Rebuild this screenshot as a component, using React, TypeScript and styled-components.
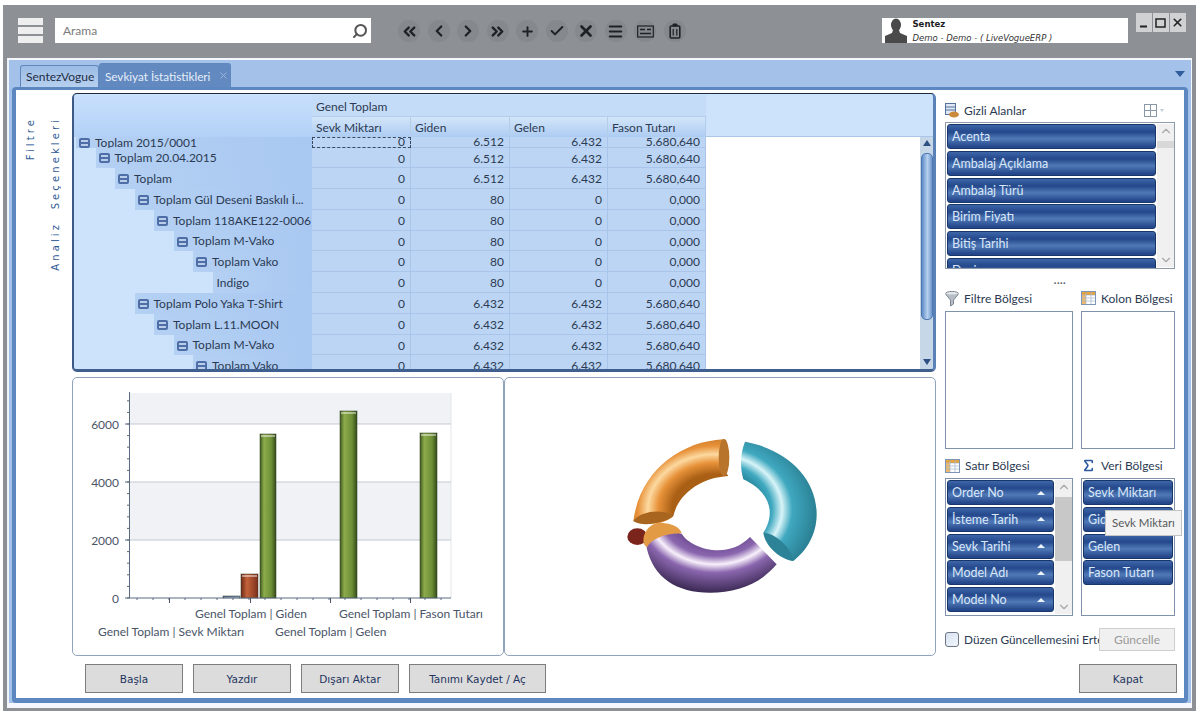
import React from 'react';
import styled, { createGlobalStyle } from 'styled-components';
import {
  Check,
  ChevronDown,
  ChevronLeft,
  ChevronRight,
  ChevronUp,
  ChevronsLeft,
  ChevronsRight,
  Menu,
  Plus,
  Search,
  Sigma,
  X,
} from 'lucide-react';

const UI_FONT = `Lato, "Open Sans", "Liberation Sans", sans-serif`;

const GlobalStyle = createGlobalStyle`
  html, body { margin: 0; padding: 0; background: #fff; }
  body { font-family: ${UI_FONT}; font-size: 12px; color: #2b3a52; }
  * { box-sizing: border-box; }
`;

type PivotRow = { level: number; label: string; values: string[]; leaf?: boolean };

const big = ['0', '6.512', '6.432', '5.680,640'];
const small = ['0', '80', '0', '0,000'];
const poly = ['0', '6.432', '6.432', '5.680,640'];

const rows: PivotRow[] = [
  { level: 0, label: 'Toplam 2015/0001', values: big },
  { level: 1, label: 'Toplam 20.04.2015', values: big },
  { level: 2, label: 'Toplam', values: big },
  { level: 3, label: 'Toplam Gül Deseni Baskılı İ...', values: small },
  { level: 4, label: 'Toplam 118AKE122-0006', values: small },
  { level: 5, label: 'Toplam M-Vako', values: small },
  { level: 6, label: 'Toplam Vako', values: small },
  { level: 7, label: 'Indigo', values: small, leaf: true },
  { level: 3, label: 'Toplam Polo Yaka T-Shirt', values: poly },
  { level: 4, label: 'Toplam L.11.MOON', values: poly },
  { level: 5, label: 'Toplam M-Vako', values: poly },
  { level: 6, label: 'Toplam Vako', values: poly },
];

const columns = ['Sevk Miktarı', 'Giden', 'Gelen', 'Fason Tutarı'];
const hiddenFields = ['Acenta', 'Ambalaj Açıklama', 'Ambalaj Türü', 'Birim Fiyatı', 'Bitiş Tarihi', 'Desi'];
const rowFields = ['Order No', 'İsteme Tarih', 'Sevk Tarihi', 'Model Adı', 'Model No'];
const dataFields = ['Sevk Miktarı', 'Giden', 'Gelen', 'Fason Tutarı'];

const Window = styled.div`
  width: 1193px;
  height: 706px;
  margin: 5px 0 0 3px;
  padding: 0 4px 3px 4px;
  background: #8d9094;
  display: flex;
  flex-direction: column;
`;

const TopBar = styled.div`
  height: 53px;
  flex: none;
  display: flex;
  align-items: flex-start;
  padding: 13px 0 0 11px;
`;

const Hamburger = styled.div`
  width: 25px;
  height: 25px;
  flex: none;
  display: flex;
  flex-direction: column;
  justify-content: space-between;
  margin-right: 12px;
  span {
    display: block;
    height: 7px;
    background: #eeeeee;
  }
`;

const SearchBox = styled.div`
  width: 316px;
  height: 25px;
  flex: none;
  background: #fff;
  display: flex;
  align-items: center;
  justify-content: space-between;
  padding: 0 2px 0 8px;
  font-size: 12px;
  color: #7b7b7b;
  svg { color: #555; transform: scaleX(-1); margin-right: 1px; }
`;

const Tools = styled.div`
  display: flex;
  gap: 7.5px;
  margin-left: 27px;
  margin-top: 2px;
`;

const ToolButton = styled.div`
  width: 22px;
  height: 22px;
  border-radius: 50%;
  background: #85888c;
  color: #1e2226;
  display: flex;
  align-items: center;
  justify-content: center;
`;

const UserBox = styled.div`
  width: 246px;
  height: 25px;
  flex: none;
  margin-left: 196px;
  background: #fff;
  display: flex;
  padding-left: 2px;
`;

const UserText = styled.div`
  margin-left: 5px;
  font-family: "DejaVu Sans", sans-serif;
  font-size: 8.5px;
  color: #1c1c1c;
  line-height: 13px;
  b { display: block; }
  i { display: block; color: #333; margin-top: 1px; }
`;

const WindowButtons = styled.div`
  display: flex;
  gap: 1px;
  margin-left: 8px;
  margin-top: -5px;
`;

const WindowButton = styled.div`
  width: 16px;
  height: 19px;
  background: #d0d1d3;
  display: flex;
  align-items: center;
  justify-content: center;
  color: #222;
`;

const Frame = styled.div`
  flex: 1;
  min-height: 0;
  background: #a4c2e9;
  border-top: 2px solid #f4f7fb;
  border-left: 2px solid #eef3fa;
  border-right: 1px solid #f4f7fb;
  border-bottom: 5px solid #f4f7fb;
  display: flex;
  flex-direction: column;
  padding: 0 3px 0 3px;
`;

const TabBar = styled.div`
  height: 27px;
  flex: none;
  display: flex;
  align-items: flex-end;
  padding-left: 8px;
`;

const Tab = styled.div<{ $active?: boolean }>`
  height: ${(p) => (p.$active ? '24px' : '22px')};
  width: ${(p) => (p.$active ? '132px' : '79px')};
  padding-left: 5px;
  display: flex;
  align-items: center;
  gap: ${(p) => (p.$active ? '8px' : '6px')};
  border-radius: 3px 3px 0 0;
  border: 1px solid #5f88bf;
  border-bottom: none;
  background: ${(p) => (p.$active ? '#6289c0' : 'linear-gradient(#9cbce5, #b6cfef)')};
  color: ${(p) => (p.$active ? '#e6effa' : '#1d2d44')};
  font-size: ${(p) => (p.$active ? '11.7px' : '12px')};
  white-space: nowrap;
  svg { color: #9fb8da; }
`;

const TabMenu = styled.div`
  margin-left: auto;
  margin-right: 3px;
  align-self: center;
  width: 0;
  height: 0;
  border-left: 5px solid transparent;
  border-right: 5px solid transparent;
  border-top: 6px solid #2e5c9c;
`;

const Panel = styled.div`
  flex: 1;
  min-height: 0;
  background: #fff;
  border: 4px solid #5c87c0;
  border-top-width: 3px;
  border-bottom-width: 5px;
  border-radius: 4px;
  display: grid;
  grid-template-columns: 48px 864px 233px;
  column-gap: 8px;
`;

const Side = styled.div`
  display: flex;
  gap: 14px;
  padding: 27px 0 0 9px;
  align-items: flex-start;
`;

const SideLabel = styled.div`
  writing-mode: vertical-rl;
  transform: rotate(180deg);
  font-family: "DejaVu Sans", sans-serif;
  font-size: 10px;
  letter-spacing: 3.1px;
  color: #2f5a95;
  white-space: pre;
`;

const Main = styled.div`
  display: flex;
  flex-direction: column;
  padding-top: 3px;
`;

const Pivot = styled.div`
  height: 279px;
  flex: none;
  background: #cde3fc;
  border-top: 1px solid #1c2b3f;
  border-left: 2px solid #3c5a85;
  border-right: 3px solid #5b82b6;
  border-bottom: 3px solid #3f5f8f;
  border-radius: 5px;
  overflow: hidden;
  display: flex;
  flex-direction: column;
  padding-top: 1px;
`;

const PivotHead = styled.div`
  height: 42px;
  flex: none;
  display: grid;
  grid-template-columns: 238px 394px 1fr;
  border-bottom: 1px solid #aac6e8;
`;

const HeadBlank = styled.div`
  background: linear-gradient(#c8e0fc, #b2d0f7);
`;

const HeadColumns = styled.div`
  display: flex;
  flex-direction: column;
`;

const HeadTitle = styled.div`
  height: 21px;
  background: #c5dcf8;
  padding-left: 4px;
  line-height: 23px;
  font-size: 12px;
`;

const HeadRow = styled.div`
  height: 21px;
  display: grid;
  grid-template-columns: 99px 99px 98px 98px;
`;

const HeadCell = styled.div`
  background: linear-gradient(#d3e5f9, #a9c9f2);
  border-top: 1px solid #b4cde9;
  border-right: 1px solid #b4cde9;
  padding-left: 4px;
  line-height: 22px;
  font-size: 12px;
`;

const PivotBody = styled.div`
  flex: 1;
  min-height: 0;
  display: flex;
`;

const RowsArea = styled.div`
  width: 632px;
  flex: none;
  overflow: hidden;
`;

const Row = styled.div<{ $first?: boolean }>`
  height: ${(p) => (p.$first ? '10.5px' : '20.8px')};
  display: grid;
  grid-template-columns: 238px 99px 99px 98px 98px;
  line-height: ${(p) => (p.$first ? '10px' : '22.5px')};
  font-size: 12px;
`;

const RowLabel = styled.div<{ $level: number }>`
  margin-left: ${(p) => 2 + p.$level * 19.5}px;
  padding-left: ${(p) => (p.$level === 7 ? 4 : 3)}px;
  padding-top: 1px;
  background: linear-gradient(90deg, #b4d0f3, #a9c8f1);
  display: flex;
  align-items: center;
  gap: 5px;
  white-space: nowrap;
  overflow: hidden;
`;

const Collapse = styled.span`
  width: 11px;
  height: 10px;
  flex: none;
  border: 2px solid #4d6ea6;
  border-radius: 2px;
  background: linear-gradient(#b9cdea 0 30%, #4d6ea6 30% 62%, #b9cdea 62%);
`;

const ValueCell = styled.div<{ $focus?: boolean }>`
  text-align: right;
  padding-right: 5px;
  background: #bcd5f4;
  border-right: 1px solid #a9c5ea;
  border-bottom: 1px solid #a9c5ea;
  overflow: hidden;
  ${(p) => (p.$focus ? 'outline: 1px dashed #3a4a60; outline-offset: -1px;' : '')}
`;

const WhiteArea = styled.div`
  flex: 1;
  background: #fff;
`;

const GridScroll = styled.div`
  width: 13px;
  flex: none;
  background: #c6d7e8;
  display: flex;
  flex-direction: column;
  align-items: center;
`;

const ArrowUp = styled.span`
  margin-top: 3px;
  width: 0;
  height: 0;
  border-left: 4px solid transparent;
  border-right: 4px solid transparent;
  border-bottom: 6px solid #2e4f82;
`;

const ArrowDown = styled.span`
  margin-top: auto;
  margin-bottom: 4px;
  width: 0;
  height: 0;
  border-left: 4px solid transparent;
  border-right: 4px solid transparent;
  border-top: 6px solid #2e4f82;
`;

const GridThumb = styled.div`
  width: 12px;
  height: 167px;
  margin-top: 7px;
  border: 1px solid #4d77b0;
  border-radius: 5px;
  background: linear-gradient(90deg, #5f8cc6, #b6d0ee 55%, #6e97cc);
`;

const ChartsRow = styled.div`
  height: 279px;
  flex: none;
  margin-top: 5px;
  display: grid;
  grid-template-columns: 432px 432px;
`;

const ChartCard = styled.div`
  border: 1px solid #8fa3bd;
  border-radius: 5px;
  background: #fff;
  display: flex;
  align-items: center;
  justify-content: center;
`;

const DonutCard = styled(ChartCard)`
  padding-bottom: 12px;
`;

const ButtonRow = styled.div`
  margin-top: 8px;
  padding-left: 13px;
  display: flex;
  gap: 10px;
`;

const PlainButton = styled.div<{ $width: number }>`
  width: ${(p) => p.$width}px;
  height: 29px;
  flex: none;
  background: #dcdcdc;
  border: 1px solid #7d7d7d;
  display: flex;
  align-items: center;
  justify-content: center;
  font-family: "DejaVu Sans", sans-serif;
  font-size: 10.5px;
  color: #1f3560;
`;

const Right = styled.div`
  display: flex;
  flex-direction: column;
  padding: 10px 2px 0 1px;
`;

const FieldHead = styled.div`
  height: 20px;
  flex: none;
  display: flex;
  align-items: center;
  gap: 5px;
  font-size: 12px;
  color: #2b3a52;
  white-space: nowrap;
`;

const LayoutPick = styled.div`
  margin-left: auto;
  margin-right: 11px;
  display: flex;
  align-items: center;
  gap: 3px;
  span {
    width: 0;
    height: 0;
    border-left: 2.5px solid transparent;
    border-right: 2.5px solid transparent;
    border-top: 3px solid #c3ccd8;
  }
`;

const HiddenList = styled.div`
  height: 147px;
  flex: none;
  margin-top: 2px;
  border: 1px solid #8d9bab;
  display: flex;
  overflow: hidden;
  padding: 1px;
`;

const FieldStack = styled.div`
  flex: 1;
  min-width: 0;
  display: flex;
  flex-direction: column;
  gap: 1.8px;
`;

const FieldButton = styled.div`
  height: 25px;
  flex: none;
  border: 1px solid #183668;
  border-radius: 3px;
  background: linear-gradient(#3d66a8, #24488b 30%, #5079b7 60%, #24468a 95%);
  color: #d9e7f9;
  font-size: 12.5px;
  padding: 0 8px 0 4px;
  display: flex;
  align-items: center;
  justify-content: space-between;
  white-space: nowrap;
  overflow: hidden;
`;

const SortMark = styled.span`
  width: 0;
  height: 0;
  border-left: 4.5px solid transparent;
  border-right: 4.5px solid transparent;
  border-bottom: 4px solid #eaf2fc;
`;

const ListScroll = styled.div<{ $thumbTop: number; $thumbHeight: number; $thumbColor: string }>`
  width: 17px;
  flex: none;
  margin-left: 1px;
  margin-right: -1px;
  background: #f0f0f0;
  display: flex;
  flex-direction: column;
  align-items: center;
  justify-content: space-between;
  color: #a8a8a8;
  position: relative;
  &::before {
    content: '';
    position: absolute;
    left: 0;
    right: 0;
    top: ${(p) => p.$thumbTop}px;
    height: ${(p) => p.$thumbHeight}px;
    background: ${(p) => p.$thumbColor};
  }
`;

const Dots = styled.div`
  height: 22px;
  flex: none;
  display: flex;
  align-items: center;
  justify-content: center;
  font-size: 11px;
  font-weight: 700;
  letter-spacing: 0.5px;
  line-height: 10px;
  color: #55606e;
`;

const ZoneGrid = styled.div`
  display: grid;
  grid-template-columns: 128px 94px;
  column-gap: 8px;
`;

const ZoneHead = styled(FieldHead)<{ $height: number }>`
  height: ${(p) => p.$height}px;
  align-items: ${(p) => (p.$height > 20 ? 'flex-end' : 'flex-start')};
  padding-bottom: ${(p) => (p.$height > 20 ? '5px' : '0')};
`;

const Zone = styled.div`
  height: 138px;
  border: 1px solid #7f92a9;
  background: #fff;
  display: flex;
  padding: 1px;
  position: relative;
`;

const Tip = styled.div`
  position: absolute;
  left: 23px;
  top: 31px;
  width: 77px;
  height: 26px;
  background: #f3f3f3;
  border: 1px solid #c4c4c4;
  color: #56585c;
  font-size: 11.5px;
  line-height: 24px;
  padding-left: 6px;
  white-space: nowrap;
`;

const DeferRow = styled.div`
  height: 23px;
  flex: none;
  margin-top: 12px;
  display: flex;
  align-items: center;
`;

const CheckBox = styled.span`
  width: 14px;
  height: 15px;
  flex: none;
  border: 1px solid #6d7686;
  border-radius: 3px;
  background: linear-gradient(135deg, #d6e2f1, #f3f6fb);
  margin-right: 5px;
`;

const DeferLabel = styled.span`
  flex: 1;
  min-width: 0;
  overflow: hidden;
  white-space: nowrap;
  font-size: 11.8px;
`;

const ApplyButton = styled.div`
  width: 76px;
  height: 23px;
  flex: none;
  background: #f0f0f0;
  border: 1px solid #cfcfcf;
  color: #9a9a9a;
  font-size: 12px;
  display: flex;
  align-items: center;
  justify-content: center;
`;

const CloseRow = styled.div`
  margin-top: 13px;
  display: flex;
  justify-content: flex-end;
  margin-right: -2px;
`;

const CardIcon = () => (
  <svg width="17" height="13" viewBox="0 0 17 13" fill="none" stroke="#1e2226">
    <rect x="0.7" y="1" width="15.6" height="11" strokeWidth="1.2" />
    <path d="M3 4.5h5M3 8.5h11M10 4.5h4" strokeWidth="1.6" />
  </svg>
);

const BinIcon = () => (
  <svg width="12" height="16" viewBox="0 0 12 16" fill="none" stroke="#1e2226">
    <path d="M4 1h4v2H4z" fill="#1e2226" />
    <rect x="1.2" y="3" width="9.6" height="12" rx="1" strokeWidth="1.6" />
    <path d="M4.2 6v6.5M7.8 6v6.5" strokeWidth="1.2" />
  </svg>
);

const Avatar = () => (
  <svg width="24" height="25" viewBox="0 0 24 25" fill="#4a4a4a">
    <ellipse cx="12" cy="7" rx="5" ry="6.5" />
    <path d="M9 12h6l1 3 7 3v7H1v-7l7-3z" />
  </svg>
);

const HiddenIcon = () => (
  <svg width="14" height="15" viewBox="0 0 14 15">
    <rect x="0.5" y="0.5" width="10" height="11" fill="#dfe8f4" stroke="#54729c" />
    <path d="M1 4h9M1 7h9" stroke="#54729c" />
    <ellipse cx="9" cy="11.5" rx="5" ry="3" fill="#c98a3a" />
  </svg>
);

const FunnelIcon = () => (
  <svg width="14" height="16" viewBox="0 0 14 16">
    <ellipse cx="7" cy="2.6" rx="6.4" ry="2.2" fill="#e2e6ea" stroke="#7d8791" />
    <path d="M1 3.5 5.5 9v6l3-2V9L13 3.5" fill="#b6bdc5" stroke="#7d8791" />
  </svg>
);

const TableIcon = ({ stripe }: { stripe: string }) => (
  <svg width="15" height="14" viewBox="0 0 15 14">
    <rect x="0.5" y="0.5" width="14" height="13" fill="#fff" stroke="#7d96b8" />
    <rect x="1" y="1" width="13" height="3" fill={stripe} />
    <rect x="1" y="4" width="4" height="9" fill={stripe} opacity="0.75" />
    <path d="M5 1v12M10 1v12M1 4h13M1 7h13M1 10h13" stroke="#a2b4cb" strokeWidth="0.7" />
  </svg>
);

const LayoutIcon = () => (
  <svg width="13" height="13" viewBox="0 0 13 13" fill="none" stroke="#8b98a8">
    <rect x="0.5" y="0.5" width="12" height="12" />
    <path d="M6.5 0v13M0 6.5h13" />
  </svg>
);

const BarChart = () => {
  const bars = [
    { x: 223, y: 596, w: 17, fill: 'url(#barBlue)' },
    { x: 241, y: 574, w: 17, fill: 'url(#barRed)' },
    { x: 260, y: 434, w: 16, fill: 'url(#barGreen)' },
    { x: 340, y: 411, w: 17, fill: 'url(#barGreen)' },
    { x: 420, y: 433, w: 17, fill: 'url(#barGreen)' },
  ];
  const minor: number[] = [];
  for (let x = 137; x < 450; x += 16) minor.push(x);
  const yMinor: number[] = [];
  for (let y = 598; y > 392; y -= 11.6) yMinor.push(y);
  return (
    <svg width="430" height="277" viewBox="73 378 430 277" fontFamily={UI_FONT} fontSize="12" fill="#4a5568">
      <defs>
        <linearGradient id="barGreen" x1="0" x2="1" y1="0" y2="0">
          <stop offset="0" stopColor="#3f5a20" />
          <stop offset="0.25" stopColor="#8cab4b" />
          <stop offset="0.7" stopColor="#6e8f37" />
          <stop offset="1" stopColor="#344c1a" />
        </linearGradient>
        <linearGradient id="barRed" x1="0" x2="1" y1="0" y2="0">
          <stop offset="0" stopColor="#6d2a18" />
          <stop offset="0.35" stopColor="#c4633a" />
          <stop offset="1" stopColor="#7c2f1c" />
        </linearGradient>
        <linearGradient id="barBlue" x1="0" x2="1" y1="0" y2="0">
          <stop offset="0" stopColor="#4d628f" />
          <stop offset="1" stopColor="#7c90bb" />
        </linearGradient>
      </defs>
      <rect x="130" y="393" width="321" height="31" fill="#f0f2f6" />
      <rect x="130" y="482" width="321" height="58" fill="#f0f2f6" />
      <path d="M451 393v205" stroke="#e4e6ea" />
      <path d="M130 424h321M130 482h321M130 540h321" stroke="#c3c9d3" />
      {bars.map((b) => (
        <g key={b.x}>
          <rect x={b.x} y={b.y} width={b.w} height={598 - b.y} fill={b.fill} stroke="#2c3a1c" strokeOpacity="0.5" />
          <rect x={b.x + 1} y={b.y + 1} width={b.w - 2} height="2" fill="#fff" opacity="0.45" />
        </g>
      ))}
      <path d="M129.5 392v206M125 598h326" stroke="#5a6a80" />
      {yMinor.map((y) => (
        <path key={y} d={`M127 ${y}h2.5`} stroke="#5a6a80" />
      ))}
      {minor.map((x) => (
        <path key={x} d={`M${x} 598v2`} stroke="#5a6a80" />
      ))}
      <path d="M169.500 598v5M250.500 598v5M330.500 598v5M410.500 598v5" stroke="#4a5568" />
      <path d="M125 424h5M125 482h5M125 540h5" stroke="#5a6a80" />
      <text x="119" y="429" textAnchor="end">6000</text>
      <text x="119" y="487" textAnchor="end">4000</text>
      <text x="119" y="545" textAnchor="end">2000</text>
      <text x="119" y="603" textAnchor="end">0</text>
      <text x="195" y="618">Genel Toplam | Giden</text>
      <text x="339" y="618">Genel Toplam | Fason Tutarı</text>
      <text x="98" y="636">Genel Toplam | Sevk Miktarı</text>
      <text x="275" y="636">Genel Toplam | Gelen</text>
    </svg>
  );
};

const tubeStops = (dark: string, mid: string, light: string, edge: string) => (
  <>
    <stop offset="0.42" stopColor={dark} />
    <stop offset="0.56" stopColor={mid} />
    <stop offset="0.66" stopColor={light} />
    <stop offset="0.76" stopColor={mid} />
    <stop offset="1" stopColor={edge} />
  </>
);

const Donut = () => {
  const ringTransform = 'translate(345 265) scale(1 0.82) translate(-345 -265)';
  const ring = { cx: 345, cy: 265, r: 305, gradientUnits: 'userSpaceOnUse' as const, gradientTransform: ringTransform };
  return (
    <svg width="240" height="180" viewBox="0 0 720 540">
      <defs>
        <radialGradient id="tubeOrange" {...ring}>{tubeStops('#a95f14', '#e8923a', '#fcd9a0', '#a85e14')}</radialGradient>
        <radialGradient id="tubeCyan" {...ring}>{tubeStops('#1f7d93', '#3fa8bf', '#d8f4f8', '#2b8094')}</radialGradient>
        <radialGradient id="tubePurple" {...ring}>{tubeStops('#6b4a90', '#8a66ae', '#f8f0fb', '#3c2a55')}</radialGradient>
      </defs>
      <ellipse cx="112" cy="347" rx="30" ry="25" fill="#7a241c" />
      <path d="M370 55C240 62 120 150 100 300C140 315 190 312 220 285C235 220 300 170 385 165C360 130 350 90 370 55Z" fill="url(#tubeOrange)" />
      <ellipse cx="372" cy="110" rx="16" ry="56" fill="#b8742a" />
      <path d="M100 300C120 270 190 262 220 285C195 305 130 320 100 300Z" fill="#a8651f" />
      <path d="M435 62C560 85 650 170 650 280C650 340 620 390 580 420L490 335C520 290 525 220 430 175C420 140 420 100 435 62Z" fill="url(#tubeCyan)" />
      <path d="M490 335C525 335 575 380 580 420C540 415 495 375 490 335Z" fill="#2c8297" />
      <path d="M132 370C125 340 145 310 175 305C200 305 235 310 245 335L210 350L145 385Z" fill="#e39a45" />
      <path d="M140 380C155 350 205 335 245 338C270 380 380 420 450 348L530 430C480 490 410 515 330 515C230 515 160 470 140 380Z" fill="url(#tubePurple)" />
    </svg>
  );
};

const Fields = ({ names, sort }: { names: string[]; sort?: boolean }) => (
  <FieldStack>
    {names.map((name) => (
      <FieldButton key={name}>
        {name}
        {sort && <SortMark />}
      </FieldButton>
    ))}
  </FieldStack>
);

const App = () => {
  return (
    <>
      <GlobalStyle />
      <Window>
        <TopBar>
          <Hamburger>
            <span />
            <span />
            <span />
          </Hamburger>
          <SearchBox>
            Arama
            <Search size={16} strokeWidth={3} />
          </SearchBox>
          <Tools>
            <ToolButton><ChevronsLeft size={19} strokeWidth={3} /></ToolButton>
            <ToolButton><ChevronLeft size={18} strokeWidth={3} /></ToolButton>
            <ToolButton><ChevronRight size={18} strokeWidth={3} /></ToolButton>
            <ToolButton><ChevronsRight size={19} strokeWidth={3} /></ToolButton>
            <ToolButton><Plus size={15} strokeWidth={3} /></ToolButton>
            <ToolButton><Check size={16} strokeWidth={3} /></ToolButton>
            <ToolButton><X size={18} strokeWidth={3.6} /></ToolButton>
            <ToolButton><Menu size={17} strokeWidth={3} /></ToolButton>
            <ToolButton><CardIcon /></ToolButton>
            <ToolButton><BinIcon /></ToolButton>
          </Tools>
          <UserBox>
            <Avatar />
            <UserText>
              <b>Sentez</b>
              <i>Demo - Demo - ( LiveVogueERP )</i>
            </UserText>
          </UserBox>
          <WindowButtons>
            <WindowButton>
              <svg width="10" height="10" viewBox="0 0 10 10"><path d="M1 8.500h7" stroke="#222" strokeWidth="2" /></svg>
            </WindowButton>
            <WindowButton>
              <svg width="11" height="10" viewBox="0 0 11 10" fill="none"><rect x="1" y="1" width="9" height="8" stroke="#222" strokeWidth="1.500" /></svg>
            </WindowButton>
            <WindowButton><X size={13} strokeWidth={3} /></WindowButton>
          </WindowButtons>
        </TopBar>
        <Frame>
          <TabBar>
            <Tab>SentezVogue</Tab>
            <Tab $active>
              Sevkiyat İstatistikleri
              <X size={11} strokeWidth={2} />
            </Tab>
            <TabMenu />
          </TabBar>
          <Panel>
            <Side>
              <SideLabel>Filtre</SideLabel>
              <SideLabel>{'Analiz  Seçenekleri'}</SideLabel>
            </Side>
            <Main>
              <Pivot>
                <PivotHead>
                  <HeadBlank />
                  <HeadColumns>
                    <HeadTitle>Genel Toplam</HeadTitle>
                    <HeadRow>
                      {columns.map((c) => (
                        <HeadCell key={c}>{c}</HeadCell>
                      ))}
                    </HeadRow>
                  </HeadColumns>
                  <div />
                </PivotHead>
                <PivotBody>
                  <RowsArea>
                    {rows.map((row, i) => (
                      <Row key={i} $first={i === 0}>
                        <RowLabel $level={row.level}>
                          {!row.leaf && <Collapse />}
                          {row.label}
                        </RowLabel>
                        {row.values.map((v, j) => (
                          <ValueCell key={j} $focus={i === 0 && j === 0}>{v}</ValueCell>
                        ))}
                      </Row>
                    ))}
                  </RowsArea>
                  <WhiteArea />
                  <GridScroll>
                    <ArrowUp />
                    <GridThumb />
                    <ArrowDown />
                  </GridScroll>
                </PivotBody>
              </Pivot>
              <ChartsRow>
                <ChartCard>
                  <BarChart />
                </ChartCard>
                <DonutCard>
                  <Donut />
                </DonutCard>
              </ChartsRow>
              <ButtonRow>
                <PlainButton $width={98}>Başla</PlainButton>
                <PlainButton $width={98}>Yazdır</PlainButton>
                <PlainButton $width={98}>Dışarı Aktar</PlainButton>
                <PlainButton $width={137}>Tanımı Kaydet / Aç</PlainButton>
              </ButtonRow>
            </Main>
            <Right>
              <FieldHead>
                <HiddenIcon />
                Gizli Alanlar
                <LayoutPick>
                  <LayoutIcon />
                  <span />
                </LayoutPick>
              </FieldHead>
              <HiddenList>
                <Fields names={hiddenFields} />
                <ListScroll $thumbTop={17} $thumbHeight={7} $thumbColor="#d8d8d8">
                  <ChevronUp size={14} />
                  <ChevronDown size={14} />
                </ListScroll>
              </HiddenList>
              <Dots>....</Dots>
              <ZoneGrid>
                <ZoneHead $height={20}><FunnelIcon />Filtre Bölgesi</ZoneHead>
                <ZoneHead $height={20}><TableIcon stripe="#e8a33a" />Kolon Bölgesi</ZoneHead>
                <Zone />
                <Zone />
                <ZoneHead $height={29}><TableIcon stripe="#e8a33a" />Satır Bölgesi</ZoneHead>
                <ZoneHead $height={29}><Sigma size={15} strokeWidth={2.6} color="#2b5a9e" />Veri Bölgesi</ZoneHead>
                <Zone>
                  <Fields names={rowFields} sort />
                  <ListScroll $thumbTop={17} $thumbHeight={64} $thumbColor="#c8c8c8">
                    <ChevronUp size={14} />
                    <ChevronDown size={14} />
                  </ListScroll>
                </Zone>
                <Zone>
                  <Fields names={dataFields} />
                  <Tip>Sevk Miktarı</Tip>
                </Zone>
              </ZoneGrid>
              <DeferRow>
                <CheckBox />
                <DeferLabel>Düzen Güncellemesini Ertele</DeferLabel>
                <ApplyButton>Güncelle</ApplyButton>
              </DeferRow>
              <CloseRow>
                <PlainButton $width={98}>Kapat</PlainButton>
              </CloseRow>
            </Right>
          </Panel>
        </Frame>
      </Window>
    </>
  );
};

export default App;
